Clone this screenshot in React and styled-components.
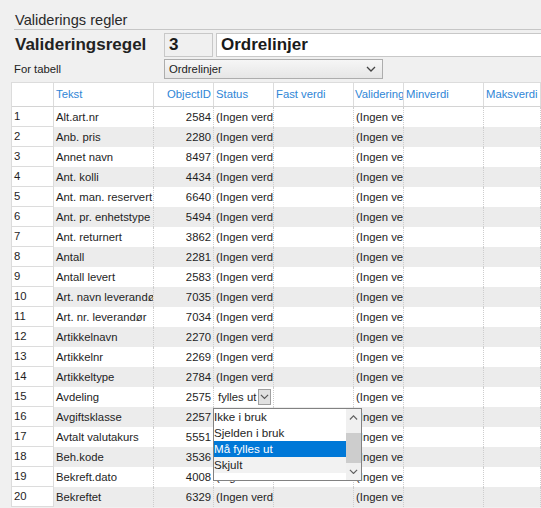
import React from "react";
import styled, { createGlobalStyle } from "styled-components";

const GlobalStyle = createGlobalStyle`
  html, body { margin: 0; padding: 0; background: #f0f0f0; }
  body {
    font-family: "Liberation Sans", Arial, sans-serif;
    width: 541px; height: 508px; overflow: hidden; color: #1e1e1e;
  }
  * { box-sizing: border-box; }
`;

const Page = styled.div`
  display: flex;
  flex-direction: column;
  width: 541px;
`;

const Title = styled.div`
  margin-left: 14px;
  padding: 11px 0 0 1px;
  height: 30px;
  line-height: 18px;
  font-size: 14.6px;
  color: #2a2a2a;
  border-bottom: 1px solid #c6c6c6;
`;

const FormRow = styled.div`
  display: flex;
  align-items: center;
  padding-left: ${p => p.$pad || 14}px;
  margin-top: ${p => p.$top || 0}px;
  height: ${p => p.$h}px;
`;

const Label = styled.div`
  width: ${p => p.$w}px;
  font-size: ${p => p.$size}px;
  font-weight: ${p => (p.$bold ? 700 : 400)};
  color: #222;
`;

const Box = styled.div`
  height: 24px;
  width: ${p => (p.$w ? `${p.$w}px` : "auto")};
  flex: ${p => (p.$w ? "none" : 1)};
  margin-left: ${p => p.$ml || 0}px;
  margin-right: ${p => p.$mr || 0}px;
  border: 1px solid #c8c8c8;
  background: ${p => p.$bg};
  font-size: 17px;
  font-weight: 700;
  line-height: 22px;
  padding-left: 4px;
  color: #1a1a1a;
`;

const Select = styled.div`
  width: 219px;
  height: 20px;
  border: 1px solid #adadad;
  background: linear-gradient(#f6f6f6, #e6e6e6);
  display: flex;
  align-items: center;
  justify-content: space-between;
  padding: 0 6px 0 4px;
  font-size: 11.3px;
  color: #222;
`;

const Table = styled.div`
  margin: 3px 0 0 11px;
  border-left: 1px solid #dcdcdc;
  border-top: 1px solid #dcdcdc;
  display: flex;
  flex-direction: column;
`;

const cols = "42px 100px 60px 60px 80px 50px 80px 1fr";

const HeadRow = styled.div`
  display: grid;
  grid-template-columns: ${cols};
  height: 24px;
  background: #fff;
  border-bottom: 1px solid #d4d4d4;
`;

const HeadCell = styled.div`
  border-right: 1px solid #dcdcdc;
  color: #2f86d6;
  font-size: 11.3px;
  line-height: 23px;
  padding: 0 ${p => (p.$tight ? 0 : 2)}px 0 ${p => (p.$tight ? 1 : 2)}px;
  white-space: nowrap;
  overflow: hidden;
  text-align: ${p => (p.$right ? "right" : "left")};
`;

const Row = styled.div`
  display: grid;
  grid-template-columns: ${cols};
  height: 20px;
  background: ${p => (p.$alt ? "#ececec" : "#ffffff")};
`;

const Cell = styled.div`
  position: relative;
  border-right: 1px dotted #cdcdcd;
  font-size: 11.3px;
  line-height: 20px;
  padding: 0 2px;
  white-space: nowrap;
  overflow: ${p => (p.$open ? "visible" : "hidden")};
  text-align: ${p => (p.$right ? "right" : "left")};
  color: #1e1e1e;
`;

const NumCell = styled.div`
  background: #fff;
  border-right: 1px solid #dcdcdc;
  border-bottom: 1px solid #dcdcdc;
  font-size: 11.3px;
  line-height: 19px;
  padding: 0 2px;
  color: #1e1e1e;
`;

const Editor = styled.div`
  display: flex;
  align-items: center;
  height: 20px;
  padding-left: 2px;
`;

const DropButton = styled.div`
  width: 15px;
  height: 16px;
  border: 1px solid #a0a0a0;
  background: #e1e1e1;
  display: flex;
  align-items: center;
  justify-content: center;
  margin-left: 2px;
`;

const Popup = styled.div`
  position: absolute;
  left: -1px;
  top: 21px;
  width: 149px;
  height: 73px;
  border: 1px solid #828282;
  background: #fff;
  display: flex;
  z-index: 5;
`;

const List = styled.div`
  flex: 1;
  display: flex;
  flex-direction: column;
`;

const Item = styled.div`
  height: 16px;
  line-height: 16px;
  font-size: 11.6px;
  color: ${p => (p.$sel ? "#fff" : "#1e1e1e")};
  background: ${p => (p.$sel ? "#0078d7" : p.$shade ? "#f2f2f2" : "#fff")};
`;

const ScrollBar = styled.div`
  width: 15px;
  background: #f0f0f0;
  display: flex;
  flex-direction: column;
  align-items: center;
`;

const Arrow = styled.div`
  height: 17px;
  width: 15px;
  display: flex;
  align-items: center;
  justify-content: center;
`;

const Track = styled.div`
  flex: 1;
  width: 15px;
  display: flex;
  flex-direction: column;
`;

const Thumb = styled.div`
  margin-top: 7px;
  height: 30px;
  width: 15px;
  background: #cdcdcd;
`;

const Chevron = ({ up, size = 9, color = "#606060" }) => (
  <svg width={size} height={size * 0.6} viewBox="0 0 10 6">
    <path
      d={up ? "M1 5 L5 1 L9 5" : "M1 1 L5 5 L9 1"}
      fill="none"
      stroke={color}
      strokeWidth="1.3"
    />
  </svg>
);

const rows = [
  ["Alt.art.nr", 2584],
  ["Anb. pris", 2280],
  ["Annet navn", 8497],
  ["Ant. kolli", 4434],
  ["Ant. man. reservert", 6640],
  ["Ant. pr. enhetstype", 5494],
  ["Ant. returnert", 3862],
  ["Antall", 2281],
  ["Antall levert", 2583],
  ["Art. navn leverandør", 7035],
  ["Art. nr. leverandør", 7034],
  ["Artikkelnavn", 2270],
  ["Artikkelnr", 2269],
  ["Artikkeltype", 2784],
  ["Avdeling", 2575],
  ["Avgiftsklasse", 2257],
  ["Avtalt valutakurs", 5551],
  ["Beh.kode", 3536],
  ["Bekreft.dato", 4008],
  ["Bekreftet", 6329],
];

const options = ["Ikke i bruk", "Sjelden i bruk", "Må fylles ut", "Skjult"];

export default function App() {
  return (
    <>
      <GlobalStyle />
      <Page>
        <Title>Validerings regler</Title>
        <FormRow $pad={15} $top={3} $h={24}>
          <Label $w={149} $size={17} $bold>Valideringsregel</Label>
          <Box $w={49} $bg="#f0f0f0">3</Box>
          <Box $ml={3} $mr={-2} $bg="#ffffff">Ordrelinjer</Box>
        </FormRow>
        <FormRow $pad={14} $top={2} $h={20}>
          <Label $w={150} $size={11.3}>For tabell</Label>
          <Select>
            <span>Ordrelinjer</span>
            <Chevron size={10} color="#444" />
          </Select>
        </FormRow>
        <Table>
          <HeadRow>
            <HeadCell />
            <HeadCell>Tekst</HeadCell>
            <HeadCell $right>ObjectID</HeadCell>
            <HeadCell>Status</HeadCell>
            <HeadCell>Fast verdi</HeadCell>
            <HeadCell $tight>Validering</HeadCell>
            <HeadCell>Minverdi</HeadCell>
            <HeadCell>Maksverdi</HeadCell>
          </HeadRow>
          {rows.map(([name, id], i) => {
            const n = i + 1;
            const open = n === 15;
            return (
              <Row key={n} $alt={n % 2 === 0}>
                <NumCell>{n}</NumCell>
                <Cell>{name}</Cell>
                <Cell $right>{id}</Cell>
                <Cell $open={open}>
                  {open ? (
                    <>
                      <Editor>
                        <span>fylles ut</span>
                        <DropButton>
                          <Chevron size={9} color="#555" />
                        </DropButton>
                      </Editor>
                      <Popup>
                        <List>
                          {options.map((o, k) => (
                            <Item key={o} $sel={k === 2} $shade={k === 3}>
                              {o}
                            </Item>
                          ))}
                        </List>
                        <ScrollBar>
                          <Arrow><Chevron up size={9} /></Arrow>
                          <Track><Thumb /></Track>
                          <Arrow><Chevron size={9} /></Arrow>
                        </ScrollBar>
                      </Popup>
                    </>
                  ) : (
                    "(Ingen verdi)"
                  )}
                </Cell>
                <Cell />
                <Cell>(Ingen verdi)</Cell>
                <Cell />
                <Cell />
              </Row>
            );
          })}
        </Table>
      </Page>
    </>
  );
}
